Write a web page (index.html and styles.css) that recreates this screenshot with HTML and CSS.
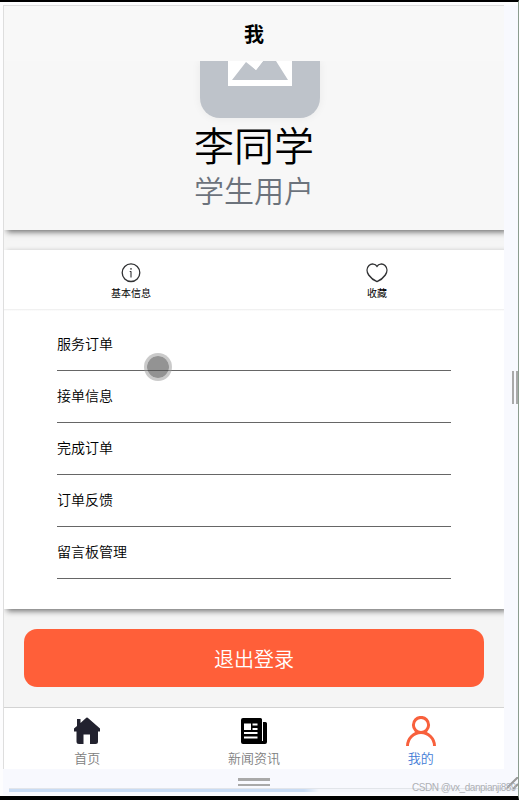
FILE: index.html
```html
<!DOCTYPE html>
<html lang="zh-CN">
<head>
    <meta charset="UTF-8">
    <meta name="viewport" content="width=device-width, initial-scale=1.0">
    <title>我</title>
    <link rel="stylesheet" href="styles.css">
</head>
<body>
    <div class="stage">
        <div class="phone">
            <div class="navbar">我</div>
            <div class="content">
                <div class="profile">
                    <div class="avatar">
                        <svg width="120" height="57" viewBox="0 0 120 57">
                            <path d="M28 0H92V25H28z" fill="#fff"/>
                            <path d="M32 19L46 1L56 9L63 0H76L88 19z" fill="#bec3ca"/>
                            <path d="M46.500 0H63L56 9z" fill="#fff"/>
                        </svg>
                    </div>
                    <div class="name">李同学</div>
                    <div class="role">学生用户</div>
                </div>
                <div class="actions">
                    <div class="action">
                        <svg width="22" height="22" viewBox="0 0 22 22" fill="none" stroke="#303133" stroke-width="1.300">
                            <circle cx="11" cy="10.700" r="8.800"/>
                            <path d="M11 9.200V15.500M9.700 9.500H11" stroke-width="1.100"/>
                            <circle cx="11" cy="6.900" r=".8" fill="#303133" stroke="none"/>
                        </svg>
                        <span>基本信息</span>
                    </div>
                    <div class="action">
                        <svg width="22" height="22" viewBox="0 0 22 22" fill="none" stroke="#303133" stroke-width="1.400">
                            <path d="M11 4.300C9.300 1.700 5.400 1.300 3 3.500C.4 6 .6 10 2.700 13C4.700 15.900 8.500 18.600 11 19.600C13.500 18.600 17.300 15.900 19.300 13C21.400 10 21.600 6 19 3.500C16.600 1.300 12.700 1.700 11 4.300z"/>
                        </svg>
                        <span>收藏</span>
                    </div>
                </div>
                <div class="menu">
                    <div class="menu-item">服务订单</div>
                    <div class="menu-item">接单信息</div>
                    <div class="menu-item">完成订单</div>
                    <div class="menu-item">订单反馈</div>
                    <div class="menu-item">留言板管理</div>
                </div>
                <button class="logout">退出登录</button>
            </div>
            <div class="tabbar">
                <div class="tab">
                    <svg width="30" height="30" viewBox="0 0 30 30" fill="#22222f">
                        <path d="M5 3H8.500V7L14.300 1.800Q15 1.300 15.700 1.800L28 12.500V15.500H26V25.500Q26 28 23.500 28H18V18.500H11.500V28H7Q4.500 28 4.500 25.500V15.500H2V12.500L5 10z"/>
                    </svg>
                    <span>首页</span>
                </div>
                <div class="tab">
                    <svg width="30" height="30" viewBox="0 0 30 30">
                        <path d="M4 2H21.500Q23 2 23 3.500V6H26.500Q28 6 28 7.500V26Q28 28 26 28H4Q2 28 2 26V4Q2 2 4 2z"/>
                        <path d="M5 7.500H12V14H5zM13.500 7.500H18.500V9.500H13.500zM13.500 12H18.500V14H13.500zM5 16H18.500V18H5zM5 20.500H18.500V22.500H5zM23 6H24V25H23z" fill="#fff"/>
                    </svg>
                    <span>新闻资讯</span>
                </div>
                <div class="tab active">
                    <svg width="30" height="30" viewBox="0 0 30 30" fill="none" stroke="#f8603c" stroke-width="3">
                        <circle cx="15" cy="9" r="7.600"/>
                        <path d="M1.500 30A13.500 13.500 0 0 1 28.500 30"/>
                    </svg>
                    <span>我的</span>
                </div>
            </div>
        </div>
        <div class="side"><div class="grip"></div></div>
    </div>
    <div class="footer">
        <div class="grip-bottom"></div>
        <div class="scroll-line"></div>
    </div>
    <div class="touch"></div>
    <svg class="resize" width="11" height="13" viewBox="0 0 11 13" stroke="#999" stroke-width="2"><path d="M0 11L11 0M6 12L11 7"/></svg>
    <div class="watermark">CSDN @vx_danpianji889</div>
</body>
</html>
```
FILE: styles.css
```css
* {
    box-sizing: border-box;
}

body {
    position: relative;
    margin: 0;
    width: 519px;
    height: 800px;
    padding: 3px 0 0 3px;
    overflow: hidden;
    background: #fdfdfe;
    border-top: 2px solid #000;
    border-bottom: 4px solid #000;
    border-right: 1px solid #8c9c8f;
    font-family: "Noto Sans CJK SC", sans-serif;
    color: #000;
}

.stage {
    display: flex;
    height: 764px;
}

.phone {
    display: flex;
    flex-direction: column;
    width: 501px;
    overflow: hidden;
    border-top: 1px solid #dedede;
    border-left: 1px solid #dedede;
    background: #f5f5f5;
}

.side {
    display: flex;
    flex: 1;
    align-items: center;
    justify-content: flex-end;
    background: #f8f9fe;
}

.grip {
    width: 6px;
    height: 33px;
    border: solid #a9a9a9;
    border-width: 0 2px;
}

.navbar {
    position: relative;
    z-index: 1;
    height: 55px;
    line-height: 56px;
    text-align: center;
    font-size: 20px;
    font-weight: 700;
    background: #f8f8f8;
}

.content {
    flex: 1;
}

.profile {
    height: 169px;
    margin-bottom: 20px;
    background: #f7f7f7;
    text-align: center;
    box-shadow: 3px 2px 6px #6c6c6c;
}

.avatar {
    width: 120px;
    height: 57px;
    margin-left: 196px;
    border-radius: 0 0 20px 20px;
    background: #bec3ca;
    box-shadow: 0 0 10px rgba(0, 0, 0, 0.06);
}

.avatar svg {
    display: block;
}

.name {
    height: 53px;
    line-height: 53px;
    font-size: 40px;
    font-weight: 350;
}

.role {
    height: 36px;
    line-height: 36px;
    font-size: 30px;
    font-weight: 350;
    color: #6c737c;
}

.actions {
    display: flex;
    height: 59px;
    padding: 12px 4px 0;
    background: #fff;
    box-shadow: 3px 0 4px rgba(0, 0, 0, 0.18);
}

.action {
    display: flex;
    flex: 1;
    flex-direction: column;
    align-items: center;
    font-size: 10px;
    line-height: 18px;
}

.menu {
    position: relative;
    height: 300px;
    padding: 10px 53px 0;
    background: linear-gradient(#ececec, #fff 2px);
    box-shadow: 3px 2px 6px #6c6c6c;
    clip-path: inset(0 0 -12px 0);
}

.menu-item {
    height: 52px;
    line-height: 48px;
    border-bottom: 1px solid #666;
    font-size: 14px;
    font-weight: 350;
}

.logout {
    display: block;
    width: 460px;
    height: 58px;
    margin: 20px 0 0 20px;
    padding: 0;
    border: 0;
    border-radius: 13px;
    background: #ff5f39;
    color: #fff;
    font-family: inherit;
    font-size: 20px;
    font-weight: 350;
}

.tabbar {
    display: flex;
    height: 62px;
    padding-top: 8px;
    border-top: 1px solid #d3d3d3;
    background: #fff;
}

.tab {
    display: flex;
    flex: 1;
    flex-direction: column;
    align-items: center;
    font-size: 13px;
    line-height: 23px;
    font-weight: 350;
    color: #808080;
}

.tab svg,
.action svg {
    flex: none;
}

.active {
    color: #3f7bd6;
}

.footer {
    height: 26px;
    padding-top: 9px;
    background: #f8f9fe;
}

.grip-bottom {
    width: 32px;
    height: 8px;
    margin-left: 235px;
    border: solid #a9a9a9;
    border-width: 3px 0 2px;
}

.scroll-line {
    height: 4px;
    margin: 2px 0 0 6px;
    border-top: 1px solid #e2e5ea;
    background: linear-gradient(to right, #c9dcf4 295px, #f4f6fb 310px);
}

/* touch point drawn over the page */
.touch {
    position: absolute;
    left: 144px;
    top: 351px;
    width: 28px;
    height: 28px;
    border: 3px solid rgba(150, 150, 150, 0.5);
    border-radius: 50%;
    background: rgba(80, 80, 80, 0.62);
    background-clip: padding-box;
}

.resize {
    position: absolute;
    right: 0;
    top: 775px;
}

.watermark {
    position: absolute;
    right: 2px;
    top: 778px;
    font-family: "Liberation Sans", Arial, sans-serif;
    font-size: 10px;
    letter-spacing: -0.45px;
    line-height: 16px;
    color: #aeb0b5;
}
```
